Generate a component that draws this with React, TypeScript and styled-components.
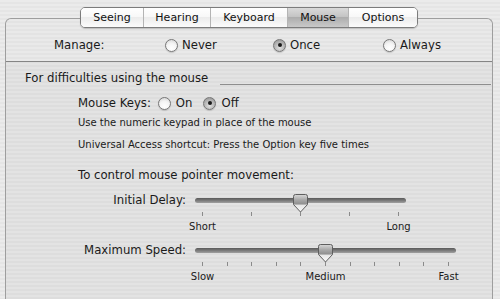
import React from "react";
import styled, { createGlobalStyle } from "styled-components";

const GlobalStyle = createGlobalStyle`
  html, body {
    margin: 0;
    padding: 0;
  }
  body {
    background: #e8e8e8;
  }
`;

const stripes = (a: string, b: string) =>
  `repeating-linear-gradient(to bottom, ${a} 0px, ${a} 2px, ${b} 2px, ${b} 4px)`;

const tabs = [
  { label: "Seeing", width: 62 },
  { label: "Hearing", width: 67 },
  { label: "Keyboard", width: 77 },
  { label: "Mouse", width: 61, active: true },
  { label: "Options", width: 69 },
];

function Radio({ checked }: { checked?: boolean }) {
  return (
    <RadioCircle $checked={checked}>
      {checked && <RadioDot />}
    </RadioCircle>
  );
}

function Thumb() {
  return (
    <svg width="15" height="19" viewBox="0 0 15 19">
      <defs>
        <linearGradient id="thumbFill" x1="0" y1="0" x2="0" y2="1">
          <stop offset="0" stopColor="#d9d9d9" />
          <stop offset="0.3" stopColor="#a9a9a9" />
          <stop offset="0.55" stopColor="#8f8f8f" />
          <stop offset="0.6" stopColor="#e6e6e6" />
          <stop offset="1" stopColor="#fafafa" />
        </linearGradient>
      </defs>
      <path
        d="M2.5 0.5 H12.5 Q14.5 0.5 14.5 2.5 V10.5 L7.5 18 L0.5 10.5 V2.5 Q0.5 0.5 2.5 0.5 Z"
        fill="url(#thumbFill)"
        stroke="#5e5e5e"
        strokeWidth="1"
      />
    </svg>
  );
}

function Slider({
  width,
  ticks,
  value,
  labels,
}: {
  width: number;
  ticks: number;
  value: number;
  labels: string[];
}) {
  return (
    <SliderBox style={{ width }}>
      <TrackArea>
        <Track />
        <ThumbWrap style={{ left: `calc(7px + (100% - 14px) * ${value} - 7.5px)` }}>
          <Thumb />
        </ThumbWrap>
      </TrackArea>
      <TickRow>
        {Array.from({ length: ticks }).map((_, i) => (
          <Tick key={i} />
        ))}
      </TickRow>
      <LabelRow>
        {labels.map((l) => (
          <TickLabel key={l}>
            <span>{l}</span>
          </TickLabel>
        ))}
      </LabelRow>
    </SliderBox>
  );
}

export default function App() {
  return (
    <>
      <GlobalStyle />
      <Window>
        <TabRow>
          <TabBar>
            {tabs.map((t) => (
              <Tab key={t.label} $width={t.width} $active={t.active}>
                {t.label}
              </Tab>
            ))}
          </TabBar>
        </TabRow>
        <Panel>
          <ManageBand>
            <ManageRow>
              <ManageLabel>Manage:</ManageLabel>
              <Option $width={108}>
                <Radio />
                <span>Never</span>
              </Option>
              <Option $width={110}>
                <Radio checked />
                <span>Once</span>
              </Option>
              <Option $width={100}>
                <Radio />
                <span>Always</span>
              </Option>
            </ManageRow>
          </ManageBand>

          <GroupTitle>
            <span>For difficulties using the mouse</span>
            <GroupLine />
          </GroupTitle>

          <Indented>
            <KeysRow>
              <span>Mouse Keys:</span>
              <InlineOption>
                <Radio />
                <span>On</span>
              </InlineOption>
              <InlineOption>
                <Radio checked />
                <span>Off</span>
              </InlineOption>
            </KeysRow>
            <Note $gap={5}>Use the numeric keypad in place of the mouse</Note>
            <Note $gap={8}>Universal Access shortcut: Press the Option key five times</Note>
            <Subhead>To control mouse pointer movement:</Subhead>
          </Indented>

          <SliderRow>
            <SliderLabel>Initial Delay:</SliderLabel>
            <Slider width={211} ticks={5} value={0.5} labels={["Short", "Long"]} />
          </SliderRow>
          <SliderRow>
            <SliderLabel>Maximum Speed:</SliderLabel>
            <Slider width={261} ticks={11} value={0.5} labels={["Slow", "Medium", "Fast"]} />
          </SliderRow>
        </Panel>
      </Window>
    </>
  );
}

const Window = styled.div`
  width: 500px;
  height: 299px;
  overflow: hidden;
  box-sizing: border-box;
  padding-top: 7px;
  display: flex;
  flex-direction: column;
  background: ${stripes("#ebebeb", "#e5e5e5")};
  font-family: "DejaVu Sans", "Liberation Sans", sans-serif;
  font-size: 11.7px;
  color: #1a1a1a;
`;

const TabRow = styled.div`
  display: flex;
  justify-content: center;
  margin: 0 7px 0 5px;
  position: relative;
  z-index: 1;
`;

const TabBar = styled.div`
  display: flex;
  height: 19px;
  border: 1px solid #7c7c7c;
  border-radius: 5px;
  overflow: hidden;
  box-shadow: 0 1px 1px rgba(0, 0, 0, 0.18);
`;

const Tab = styled.div<{ $width: number; $active?: boolean }>`
  width: ${(p) => p.$width}px;
  display: flex;
  align-items: center;
  justify-content: center;
  font-size: 11px;
  color: #111;
  box-sizing: border-box;
  border-left: 1px solid #b4b4b4;
  &:first-child {
    border-left: none;
  }
  background: ${(p) =>
    p.$active
      ? "linear-gradient(to bottom, #dadada 0%, #c4c4c4 45%, #adadad 50%, #c9c9c9 100%)"
      : "linear-gradient(to bottom, #ffffff 0%, #f8f8f8 45%, #ececec 50%, #fbfbfb 100%)"};
`;

const Panel = styled.div`
  flex: 1;
  margin: -10px 7px 0 5px;
  border: 1px solid #9e9e9e;
  border-bottom: none;
  border-radius: 6px 6px 0 0;
  background: ${stripes("#e3e3e3", "#dddddd")};
  display: flex;
  flex-direction: column;
`;

const ManageBand = styled.div`
  height: 43px;
  box-sizing: border-box;
  padding-top: 19px;
  border-bottom: 1px solid #858585;
  border-radius: 6px 6px 0 0;
  background: ${stripes("#e9e9e9", "#e3e3e3")};
`;

const ManageRow = styled.div`
  display: flex;
  align-items: center;
  height: 14px;
  padding-left: 48px;
`;

const ManageLabel = styled.span`
  width: 111px;
`;

const Option = styled.div<{ $width: number }>`
  width: ${(p) => p.$width}px;
  display: flex;
  align-items: center;
  gap: 4px;
`;

const RadioCircle = styled.span<{ $checked?: boolean }>`
  width: 13px;
  height: 13px;
  box-sizing: border-box;
  border-radius: 50%;
  border: 1px solid #777;
  display: flex;
  align-items: center;
  justify-content: center;
  flex-shrink: 0;
  background: ${(p) =>
    p.$checked
      ? "radial-gradient(circle at 50% 70%, #e0e0e0 0%, #b4b4b4 55%, #8c8c8c 100%)"
      : "radial-gradient(circle at 50% 75%, #ffffff 0%, #f4f4f4 50%, #cfcfcf 100%)"};
  box-shadow: 0 1px 1px rgba(0, 0, 0, 0.15);
`;

const RadioDot = styled.span`
  width: 4px;
  height: 4px;
  border-radius: 50%;
  background: #1a1a1a;
`;

const GroupTitle = styled.div`
  display: flex;
  align-items: flex-end;
  height: 16px;
  margin-top: 8px;
  padding-left: 19px;
  line-height: 16px;
`;

const GroupLine = styled.div`
  flex: 1;
  height: 0;
  border-top: 1px solid #8e8e8e;
  margin: 0 1px 1px 12px;
`;

const Indented = styled.div`
  display: flex;
  flex-direction: column;
  padding-left: 72px;
`;

const KeysRow = styled.div`
  display: flex;
  align-items: center;
  height: 16px;
  margin-top: 9px;
  gap: 7px;
`;

const InlineOption = styled.div`
  display: flex;
  align-items: center;
  gap: 5px;
  margin-right: 4px;
`;

const Note = styled.div<{ $gap: number }>`
  font-size: 10px;
  line-height: 14px;
  margin-top: ${(p) => p.$gap}px;
`;

const Subhead = styled.div`
  line-height: 16px;
  margin-top: 15px;
`;

const SliderRow = styled.div`
  display: grid;
  grid-template-columns: 180px auto;
  column-gap: 9px;
  align-items: start;
  margin-top: 9px;
`;

const SliderLabel = styled.div`
  text-align: right;
  line-height: 16px;
`;

const SliderBox = styled.div`
  display: flex;
  flex-direction: column;
`;

const TrackArea = styled.div`
  position: relative;
  height: 16px;
`;

const Track = styled.div`
  position: absolute;
  left: 0;
  right: 0;
  top: 6px;
  height: 5px;
  border-radius: 3px;
  background: linear-gradient(to bottom, #5a5a5a 0%, #7a7a7a 50%, #a0a0a0 100%);
`;

const ThumbWrap = styled.div`
  position: absolute;
  top: 2px;
  width: 15px;
  height: 19px;
  line-height: 0;
`;

const TickRow = styled.div`
  display: flex;
  justify-content: space-between;
  padding: 0 7px;
  margin-top: 4px;
  height: 4px;
`;

const Tick = styled.span`
  width: 1px;
  height: 4px;
  background: #8a8a8a;
`;

const LabelRow = styled.div`
  display: flex;
  justify-content: space-between;
  padding: 0 7px;
  margin-top: 5px;
  height: 12px;
`;

const TickLabel = styled.div`
  width: 1px;
  display: flex;
  justify-content: center;
  font-size: 10px;
  line-height: 12px;
  white-space: nowrap;
`;
